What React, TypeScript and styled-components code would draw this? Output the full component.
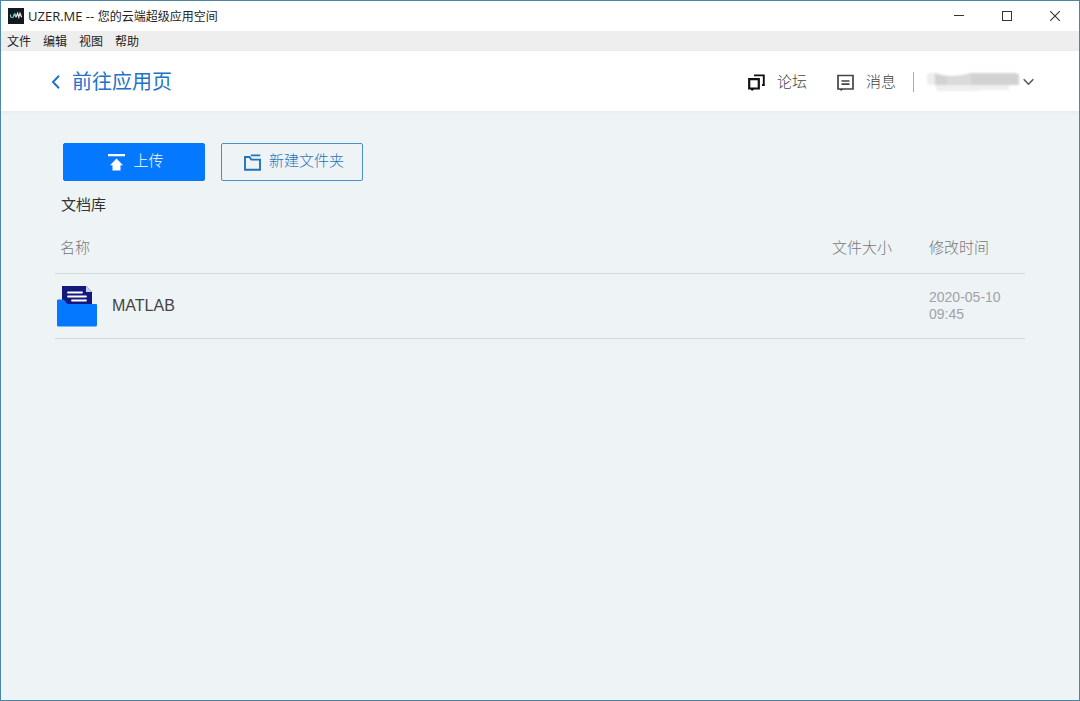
import React from 'react';
import styled, { createGlobalStyle } from 'styled-components';

const GlobalStyle = createGlobalStyle`
  *, *::before, *::after { box-sizing: border-box; }
  body {
    margin: 0;
    font-family: "Liberation Sans", "Noto Sans CJK SC", sans-serif;
    font-size: 15px;
    font-weight: 300;
    color: #333;
  }
  button { font: inherit; color: inherit; background: none; border: 0; padding: 0; cursor: pointer; }
  a { color: inherit; text-decoration: none; }
  svg { display: block; flex: none; }
`;

const AppWindow = styled.div`
  min-height: 100vh;
  display: flex;
  flex-direction: column;
  border: 1px solid #4b87a3;
  background: #eef3f6;
`;

const TitleBar = styled.header`
  display: flex;
  align-items: center;
  height: 30px;
  padding-left: 7px;
  background: #fff;
`;

const WindowTitle = styled.h1`
  flex: 1;
  margin: 0 0 0 4px;
  font: 400 12px/20px "Open Sans", "Noto Sans CJK SC", sans-serif;
  color: #222;
`;

const ProductName = styled.span`
  font-size: 13px;
`;

const WindowButton = styled.button`
  display: flex;
  align-items: center;
  justify-content: center;
  width: 48px;
  height: 30px;
`;

const MenuBar = styled.nav`
  display: flex;
  gap: 12px;
  height: 20px;
  padding: 0 6px;
  background: #eee;
`;

const MenuButton = styled.button`
  padding-top: 2px;
  font-size: 12px;
  font-weight: 400;
  line-height: 18px;
  color: #222;
`;

const AppHeader = styled.div`
  display: flex;
  align-items: center;
  justify-content: space-between;
  height: 60px;
  padding: 2px 45px 0 49px;
  background: #fff;
  box-shadow: 0 1px 3px rgba(160, 175, 190, 0.15);
`;

const BackLink = styled.a`
  display: flex;
  align-items: center;
  gap: 11px;
  font-size: 20px;
  line-height: 30px;
  font-weight: 400;
  color: #2273c8;
`;

const HeaderActions = styled.div`
  display: flex;
  align-items: center;
`;

const HeaderLink = styled.a`
  display: flex;
  align-items: center;
  gap: 12px;
  margin-right: 30px;
  line-height: 24px;
  color: #444;
  &:last-of-type { margin-right: 17px; }
`;

const Divider = styled.span`
  width: 1px;
  height: 20px;
  background: #aaa;
`;

const AccountButton = styled.button`
  display: flex;
  align-items: center;
  gap: 2px;
  margin-left: 11px;
`;

const Content = styled.main`
  flex: 1;
  padding: 32px 54px;
`;

const Toolbar = styled.div`
  display: flex;
  gap: 16px;
  padding-left: 8px;
`;

const ActionButton = styled.button<{ $primary?: boolean }>`
  display: flex;
  align-items: center;
  justify-content: center;
  gap: 8px;
  width: 142px;
  height: 38px;
  padding-left: 4px;
  border: 1px solid ${(p) => (p.$primary ? '#0478fe' : '#4a90c4')};
  border-radius: 2px;
  background: ${(p) => (p.$primary ? '#0478fe' : 'transparent')};
  color: ${(p) => (p.$primary ? '#fff' : '#1f74bd')};
`;

const ActionLabel = styled.span`
  padding-bottom: 3px;
  line-height: 20px;
`;

const LibraryTitle = styled.h2`
  margin: 12px 0 0 6px;
  font-size: 15px;
  font-weight: 400;
  line-height: 24px;
  color: #333;
`;

const FileTable = styled.table`
  width: 100%;
  margin-top: 6px;
  border-collapse: collapse;
  table-layout: fixed;
`;

const HeadCell = styled.th<{ $width?: string }>`
  width: ${(p) => p.$width ?? 'auto'};
  height: 50px;
  padding: 0 0 0 5px;
  border-bottom: 1px solid #d2d7dc;
  text-align: left;
  font-weight: 300;
  line-height: 24px;
  color: #777;
`;

const Cell = styled.td`
  height: 65px;
  padding: 0 0 0 2px;
  border-bottom: 1px solid #d2d7dc;
`;

const FileLink = styled.a`
  display: flex;
  align-items: center;
  gap: 15px;
  font-size: 16px;
  font-weight: 400;
  color: #444;
`;

const Modified = styled.time`
  display: block;
  width: 80px;
  margin-left: 3px;
  font-size: 14px;
  font-weight: 400;
  line-height: 17px;
  color: #a0a3a6;
`;

const Logo = () => (
  <svg width="16" height="16" viewBox="0 0 16 16" aria-hidden="true">
    <rect width="16" height="16" fill="#111a1e" />
    <path d="M2.5 6.5v1.2c0 2.4 3.2 2.4 3.2 0V6.2M5.7 8l1.2-2.2L8 9.2" fill="none" stroke="#7fd0c8" strokeWidth="1.2" />
    <path d="M8 9.2l1.6-4 1.2 4 1.2-4 1.6 4" fill="none" stroke="#e8f0f0" strokeWidth="1.2" />
  </svg>
);

const MinimizeIcon = () => (
  <svg width="10" height="10" viewBox="0 0 10 10"><path d="M0 4.5h10" stroke="#333" /></svg>
);

const MaximizeIcon = () => (
  <svg width="10" height="10" viewBox="0 0 10 10"><rect x=".5" y=".5" width="9" height="9" fill="none" stroke="#333" /></svg>
);

const CloseIcon = () => (
  <svg width="10" height="10" viewBox="0 0 10 10"><path d="M0 0l10 10M10 0L0 10" stroke="#333" strokeWidth="1.1" /></svg>
);

const BackIcon = () => (
  <svg width="11" height="14" viewBox="0 0 11 14" aria-hidden="true">
    <path d="M9 .8L3 7l6 6.2" fill="none" stroke="#2273c8" strokeWidth="2" />
  </svg>
);

const ForumIcon = () => (
  <svg width="17" height="17" viewBox="0 0 17 17" aria-hidden="true">
    <path d="M1.200 5.200h9.600v9.300H1.200z" fill="none" stroke="#111" strokeWidth="2.200" />
    <path d="M2.500 15h4l-2.500 2z" fill="#111" />
    <path d="M6 1.400h9.800V11H14" fill="none" stroke="#111" strokeWidth="1.900" />
  </svg>
);

const MessageIcon = () => (
  <svg width="17" height="17" viewBox="0 0 17 17" aria-hidden="true">
    <path d="M1 1.500h15v13.500H1z" fill="none" stroke="#444" strokeWidth="1.700" />
    <path d="M2.500 15h4l-2.500 2z" fill="#444" />
    <path d="M4.500 7h8M4.500 10.200h8" stroke="#444" strokeWidth="1.700" />
  </svg>
);

const MaskedName = () => (
  <svg width="96" height="24" viewBox="0 0 96 24" role="img" aria-label="账户">
    <defs><filter id="soften"><feGaussianBlur stdDeviation="0.8" /></filter></defs>
    <g filter="url(#soften)">
      <rect x="2" y="3" width="10" height="12" rx="3" fill="#eee" />
      <path d="M10 3c8 4 26 4 36 0h44q4 0 4 4v8H10z" fill="#d2d2d2" />
      <path d="M22 6c8 2 16 1 24-1v10H22z" fill="#dadada" />
      <path d="M10 15h74v5H62l-12 1H12z" fill="#efefef" />
    </g>
  </svg>
);

const ChevronIcon = () => (
  <svg width="11" height="8" viewBox="0 0 11 8" aria-hidden="true">
    <path d="M.7 1.200l4.800 5 4.800-5" fill="none" stroke="#555" strokeWidth="1.500" />
  </svg>
);

const UploadIcon = () => (
  <svg width="17" height="18" viewBox="0 0 17 18" aria-hidden="true">
    <path d="M0 1h17v2.200H0zM8.500 5.500L15 12.200h-2.500v5.300h-8v-5.300H2z" fill="#fff" />
  </svg>
);

const NewFolderIcon = () => (
  <svg width="17" height="17" viewBox="0 0 17 17" aria-hidden="true">
    <path d="M1 3h4.500l1.800 2.600H16v10.200H1zM6.800 1.400h9.500" fill="none" stroke="#1f74bd" strokeWidth="1.900" />
  </svg>
);

const FolderIcon = () => (
  <svg width="40" height="42" viewBox="0 0 40 42" aria-hidden="true">
    <path d="M5 1h24l6 6v16H5z" fill="#14197d" />
    <path d="M29 1v6h6z" fill="#c3d3f5" />
    <path d="M1 14.500h5.500l4 4.500h28.500q1 0 1 1v20q0 1.500-1.500 1.500h-37Q0 41.500 0 40V15.500q0-1 1-1z" fill="#0478fe" />
    <path d="M11 7.500h14M11 11.500h18M15 15.500h14" stroke="#fff" strokeWidth="1.800" strokeLinecap="round" />
  </svg>
);

const menus = ['文件', '编辑', '视图', '帮助'];
const files = [{ name: 'MATLAB', size: '', modified: '2020-05-10 09:45' }];

export default function App() {
  return (
    <AppWindow>
      <GlobalStyle />
      <TitleBar>
        <Logo />
        <WindowTitle><ProductName>UZER.ME -- </ProductName>您的云端超级应用空间</WindowTitle>
        <WindowButton aria-label="最小化"><MinimizeIcon /></WindowButton>
        <WindowButton aria-label="最大化"><MaximizeIcon /></WindowButton>
        <WindowButton aria-label="关闭"><CloseIcon /></WindowButton>
      </TitleBar>
      <MenuBar>
        {menus.map((label) => <MenuButton key={label}>{label}</MenuButton>)}
      </MenuBar>
      <AppHeader>
        <BackLink href="#apps"><BackIcon />前往应用页</BackLink>
        <HeaderActions>
          <HeaderLink href="#forum"><ForumIcon />论坛</HeaderLink>
          <HeaderLink href="#messages"><MessageIcon />消息</HeaderLink>
          <Divider />
          <AccountButton aria-label="账户菜单"><MaskedName /><ChevronIcon /></AccountButton>
        </HeaderActions>
      </AppHeader>
      <Content>
        <Toolbar>
          <ActionButton $primary><UploadIcon /><ActionLabel>上传</ActionLabel></ActionButton>
          <ActionButton><NewFolderIcon /><ActionLabel>新建文件夹</ActionLabel></ActionButton>
        </Toolbar>
        <LibraryTitle>文档库</LibraryTitle>
        <FileTable>
          <thead>
            <tr>
              <HeadCell>名称</HeadCell>
              <HeadCell $width="97px">文件大小</HeadCell>
              <HeadCell $width="101px">修改时间</HeadCell>
            </tr>
          </thead>
          <tbody>
            {files.map((file) => (
              <tr key={file.name}>
                <Cell><FileLink href="#matlab"><FolderIcon />{file.name}</FileLink></Cell>
                <Cell>{file.size}</Cell>
                <Cell><Modified>{file.modified}</Modified></Cell>
              </tr>
            ))}
          </tbody>
        </FileTable>
      </Content>
    </AppWindow>
  );
}
